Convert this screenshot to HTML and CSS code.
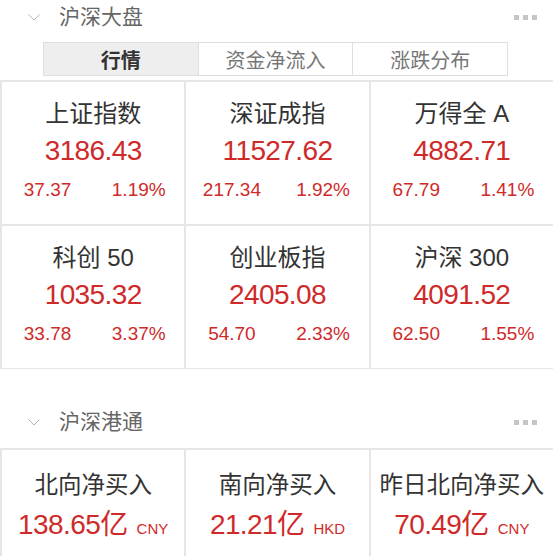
FILE: index.html
```html
<!DOCTYPE html>
<html lang="zh-CN">
<head>
<meta charset="utf-8">
<title>沪深大盘</title>
<link rel="stylesheet" href="styles.css">
</head>
<body>
<section class="section">
  <div class="sec-head">
    <svg class="chev" width="12" height="7" viewBox="0 0 12 7"><polyline points="0.5,0.5 6,6 11.5,0.5" fill="none" stroke="#b5b5b5" stroke-width="1"/></svg>
    <span class="sec-title">沪深大盘</span>
    <span class="dots"><i></i><i></i><i></i></span>
  </div>
  <div class="tabs">
    <div class="tab active">行情</div>
    <div class="tab">资金净流入</div>
    <div class="tab">涨跌分布</div>
  </div>
  <div class="grid">
    <div class="card">
      <div class="name">上证指数</div>
      <div class="value">3186.43</div>
      <div class="chg"><span>37.37</span><span>1.19%</span></div>
    </div>
    <div class="card">
      <div class="name">深证成指</div>
      <div class="value">11527.62</div>
      <div class="chg"><span>217.34</span><span>1.92%</span></div>
    </div>
    <div class="card">
      <div class="name">万得全 A</div>
      <div class="value">4882.71</div>
      <div class="chg"><span>67.79</span><span>1.41%</span></div>
    </div>
    <div class="card">
      <div class="name">科创 50</div>
      <div class="value">1035.32</div>
      <div class="chg"><span>33.78</span><span>3.37%</span></div>
    </div>
    <div class="card">
      <div class="name">创业板指</div>
      <div class="value">2405.08</div>
      <div class="chg"><span>54.70</span><span>2.33%</span></div>
    </div>
    <div class="card">
      <div class="name">沪深 300</div>
      <div class="value">4091.52</div>
      <div class="chg"><span>62.50</span><span>1.55%</span></div>
    </div>
  </div>
</section>
<section class="section second">
  <div class="sec-head">
    <svg class="chev" width="12" height="7" viewBox="0 0 12 7"><polyline points="0.5,0.5 6,6 11.5,0.5" fill="none" stroke="#b5b5b5" stroke-width="1"/></svg>
    <span class="sec-title">沪深港通</span>
    <span class="dots"><i></i><i></i><i></i></span>
  </div>
  <div class="grid grid-flow">
    <div class="card flow">
      <div class="name">北向净买入</div>
      <div class="value">138.65亿<small>CNY</small></div>
    </div>
    <div class="card flow">
      <div class="name">南向净买入</div>
      <div class="value">21.21亿<small>HKD</small></div>
    </div>
    <div class="card flow">
      <div class="name">昨日北向净买入</div>
      <div class="value">70.49亿<small>CNY</small></div>
    </div>
  </div>
</section>
</body>
</html>
```

FILE: styles.css
```css
html, body {
  margin: 0;
  padding: 0;
  background: #ffffff;
}
body {
  width: 553px;
  height: 556px;
  overflow: hidden;
  font-family: "Liberation Sans", "Noto Sans CJK SC", sans-serif;
  color: #333;
}
.sec-head {
  display: flex;
  align-items: center;
  height: 34px;
}
.chev {
  margin-left: 28px;
  flex: none;
}
.sec-title {
  margin-left: 19px;
  font-size: 21px;
  line-height: 28px;
  color: #666;
}
.dots {
  margin-left: auto;
  margin-right: 16px;
  display: flex;
  gap: 4px;
}
.dots i {
  display: block;
  width: 5px;
  height: 5px;
  background: #c6c6c6;
}
.tabs {
  display: flex;
  margin: 8px 0 0 43px;
  width: 465px;
  height: 34px;
  box-sizing: border-box;
  border: 1px solid #dedede;
}
.tab {
  flex: 1;
  display: flex;
  align-items: center;
  justify-content: center;
  font-size: 20px;
  color: #777;
}
.tab + .tab {
  border-left: 1px solid #dedede;
}
.tab.active {
  background: #eeeeee;
  color: #333;
  font-weight: bold;
}
.grid {
  margin-top: 4px;
  display: grid;
  grid-template-columns: repeat(3, 1fr);
  gap: 2px;
  padding: 2px 0 1px 2px;
  background: #e6e6e6;
}
.card {
  background: #fff;
  height: 142px;
  box-sizing: border-box;
  padding-top: 18px;
  text-align: center;
}
.name {
  font-size: 24px;
  line-height: 28px;
  color: #333;
}
.value {
  margin-top: 7px;
  font-size: 28px;
  line-height: 32px;
  letter-spacing: -0.6px;
  color: #cf2a2a;
}
.chg {
  margin-top: 12px;
  display: grid;
  grid-template-columns: 1fr 1fr;
  font-size: 19px;
  line-height: 22px;
  color: #cf2a2a;
}
.second {
  margin-top: 36px;
}
.grid-flow {
  margin-top: 9px;
  padding-bottom: 0;
}
.card.flow {
  height: 120px;
  padding-top: 21px;
}
.flow .name {
  font-size: 23.5px;
}
.flow .value {
  margin-top: 10px;
}
.value small {
  font-size: 15px;
  letter-spacing: 0;
  margin-left: 9px;
}
```
